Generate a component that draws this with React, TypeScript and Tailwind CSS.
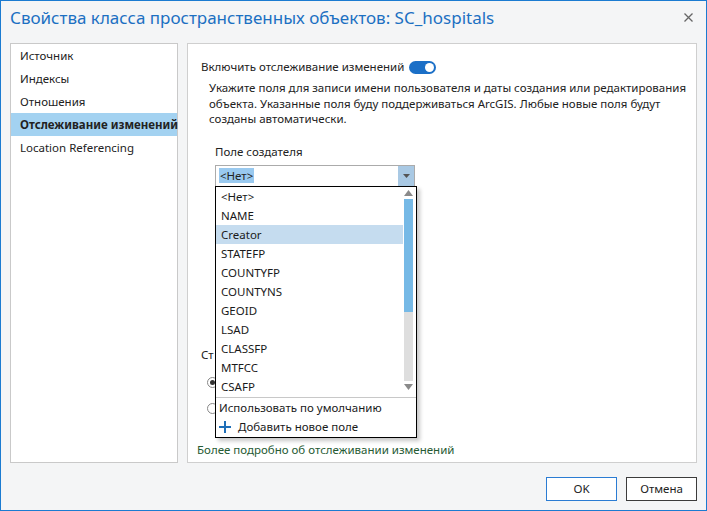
const fields = ["<Нет>", "NAME", "Creator", "STATEFP", "COUNTYFP", "COUNTYNS", "GEOID", "LSAD", "CLASSFP", "MTFCC", "CSAFP"];

const navItems = ["Источник", "Индексы", "Отношения", "Отслеживание изменений", "Location Referencing"];

const Combo = ({ value }: { value?: string }) => (
  <div className="flex h-[22px] w-[200px] border border-[#ababab] bg-white">
    <div className="flex flex-1 items-center pl-[3px]">
      {value && <span className="bg-[#99c9ef] px-[1px] leading-[15px]">{value}</span>}
    </div>
    <div className="flex w-[16px] items-center justify-center bg-[#a9c9e4]">
      <svg width="7" height="4" viewBox="0 0 7 4">
        <path d="M0 0h7L3.5 4z" fill="#555" />
      </svg>
    </div>
  </div>
);

const Radio = ({ checked }: { checked?: boolean }) => (
  <div className="flex h-[11px] w-[11px] items-center justify-center rounded-full border border-[#888] bg-white">
    {checked && <div className="h-[5px] w-[5px] rounded-full bg-[#333]" />}
  </div>
);

const FieldPopup = () => (
  <div className="absolute left-[27px] top-[142px] flex h-[252px] w-[202px] flex-col border border-black bg-white shadow-[3px_3px_4px_rgba(0,0,0,0.22)]">
    <div className="flex h-[210px] overflow-hidden">
      <div className="w-[187px]">
        {fields.map((f) => (
          <div
            key={f}
            className={`flex h-[19px] items-center pl-[5px] text-[#1a1a1a] ${f === "Creator" ? "bg-[#c5dcef]" : ""}`}
          >
            {f}
          </div>
        ))}
      </div>
      <div className="ml-[1px] flex w-[9px] flex-col">
        <div className="flex h-[11px] items-center justify-center">
          <svg width="9" height="6" viewBox="0 0 9 6">
            <path d="M4.5 0L9 6H0z" fill="#8a8a8a" />
          </svg>
        </div>
        <div className="mt-[1px] h-[113px] bg-[#76b9e6]" />
        <div className="h-[69px] bg-[#dedede]" />
        <div className="flex h-[11px] items-center justify-center">
          <svg width="9" height="6" viewBox="0 0 9 6">
            <path d="M0 0h9L4.5 6z" fill="#8a8a8a" />
          </svg>
        </div>
      </div>
    </div>
    <div className="border-t border-[#c8c8c8]" />
    <div className="flex h-[19px] items-center pl-[3px] text-[#1a1a1a]">Использовать по умолчанию</div>
    <div className="flex h-[19px] items-center gap-[7px] pl-[3px] text-[#1a1a1a]">
      <svg width="12" height="12" viewBox="0 0 12 12">
        <path d="M6 0v12M0 6h12" stroke="#1f6fb8" strokeWidth="2" />
      </svg>
      Добавить новое поле
    </div>
  </div>
);

export default function App() {
  return (
    <div className="flex h-[511px] w-[707px] flex-col border border-[#1b7bd1] bg-[#f4f5f6] font-['Noto_Sans','DejaVu_Sans',sans-serif] text-[11.5px] text-[#222]">
      <div className="flex h-[42px] items-start justify-between pl-[9px] pr-[13px] pt-[5px]">
        <h1 className="text-[17px] leading-[24px] text-[#1c70c2]">Свойства класса пространственных объектов: SC_hospitals</h1>
        <svg className="mt-[7px]" width="9" height="9" viewBox="0 0 9 9">
          <path d="M0.5 0.5l8 8M8.5 0.5l-8 8" stroke="#666" strokeWidth="1.3" />
        </svg>
      </div>

      <div className="flex h-[420px] gap-[9px] px-[9px]">
        <div className="w-[168px] border border-[#c9c9c9] bg-white">
          {navItems.map((item) => (
            <div
              key={item}
              className={`flex h-[23px] items-center whitespace-nowrap pl-[9px] ${
                item === "Отслеживание изменений" ? "bg-[#a3d2f1] font-bold" : ""
              }`}
            >
              {item}
            </div>
          ))}
        </div>

        <div className="relative flex w-[510px] flex-col border border-[#cfcfcf] bg-white">
          <div className="mt-[15px] flex h-[16px] items-center gap-[5px] pl-[13px]">
            <span>Включить отслеживание изменений</span>
            <div className="flex h-[13px] w-[27px] items-center justify-end rounded-full bg-[#1b6fc7] pr-[2px]">
              <div className="h-[9px] w-[9px] rounded-full bg-white" />
            </div>
          </div>
          <div className="mt-[5px] whitespace-nowrap pl-[21px] leading-[15.5px]">
            <div>Укажите поля для записи имени пользователя и даты создания или редактирования</div>
            <div>объекта. Указанные поля буду поддерживаться ArcGIS. Любые новые поля будут</div>
            <div>созданы автоматически.</div>
          </div>

          <div className="mt-[17px] pl-[27px]">
            <div className="leading-[16px]">Поле создателя</div>
            <div className="mt-[5px]">
              <Combo value="<Нет>" />
            </div>
          </div>

          <div className="mt-[160px] pl-[13px] leading-[16px]">Ст</div>
          <div className="mt-[14px] pl-[19px]">
            <Radio checked />
          </div>
          <div className="mt-[15px] pl-[19px]">
            <Radio />
          </div>

          <div className="mt-auto mb-[4px] pl-[9px] leading-[16px] text-[#265a33]">
            Более подробно об отслеживании изменений
          </div>

          <FieldPopup />
        </div>
      </div>

      <div className="flex justify-end gap-[9px] pr-[9px] pt-[14px]">
        <button className="h-[24px] w-[71px] border border-[#2b7cd3] bg-white text-[#222]">OK</button>
        <button className="h-[24px] w-[71px] border border-[#3c3c3c] bg-white text-[#222]">Отмена</button>
      </div>
    </div>
  );
}
